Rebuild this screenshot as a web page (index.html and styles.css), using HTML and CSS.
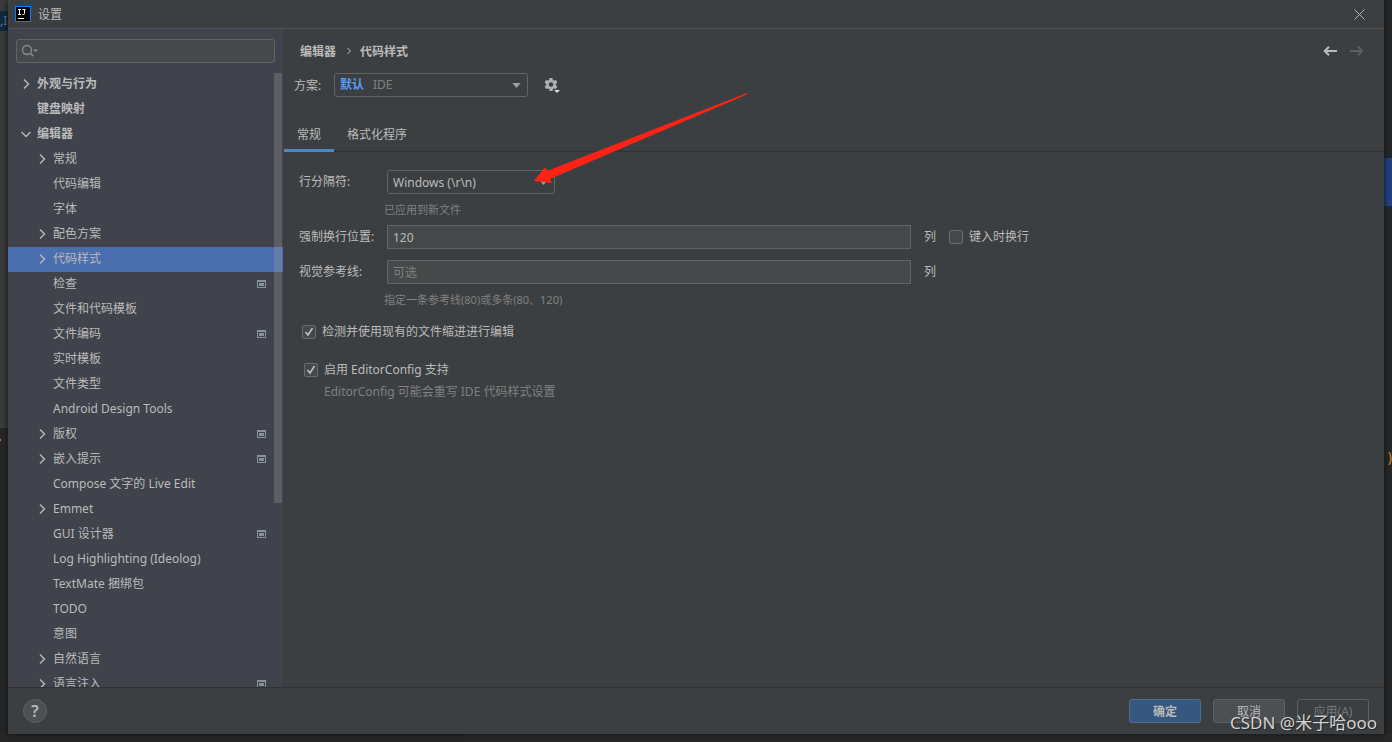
FILE: index.html
```html
<!DOCTYPE html>
<html lang="zh-CN">
<head>
<meta charset="utf-8">
<title>设置</title>
<link rel="stylesheet" href="styles.css">
</head>
<body>
<svg class="defs" aria-hidden="true">
  <symbol id="chev" viewBox="0 0 16 16"><path d="M6 3.5 10.5 8 6 12.5" fill="none" stroke="#b4b6b8" stroke-width="1.5"/></symbol>
  <symbol id="chev-down" viewBox="0 0 16 16"><path d="M3.5 6 8 10.5 12.5 6" fill="none" stroke="#b4b6b8" stroke-width="1.5"/></symbol>
  <symbol id="proj" viewBox="0 0 9 8"><path fill="#87939a" fill-rule="evenodd" d="M0 0h9v8H0zM1 2v5h7V2zM2 3h5v3H2z"/></symbol>
  <symbol id="drop" viewBox="0 0 10 6"><path fill="#9da0a2" d="M0 0h10L5 6z"/></symbol>
</svg>
<div class="backdrop">
  <span class="ide-strip"></span><span class="ide-sel">,ID</span><span class="ide-orange"></span>
  <span class="ide-blue"></span><span class="ide-paren">)</span><span class="ide-bottom"></span>
</div>
<div class="dialog" role="dialog" aria-labelledby="title">
  <header class="titlebar">
    <svg class="logo" viewBox="0 0 16 16"><path fill="#087cfa" d="M0 0h16v16H0z"/><path fill="#000" d="M1 1h14v14H1z"/><path d="M3 3.5h3M4.500 3.500v5M3 8.500h3M7.500 3.500h3M9.500 3.500v4q0 1-1 1H7.500M3 12.500h6" fill="none" stroke="#fff"/></svg>
    <h1 id="title">设置</h1>
    <button class="icon-btn" aria-label="关闭"><svg class="close" viewBox="0 0 11 11"><path d="m.5.5 10 10M10.500.5l-10 10" fill="none" stroke="#b2b4b5"/></svg></button>
  </header>
  <div class="content">
    <aside class="sidebar">
      <div class="search">
        <svg class="search-icon" viewBox="0 0 18 14"><circle cx="6" cy="6" r="4.500" fill="none" stroke="#858b90" stroke-width="1.300"/><path d="m9.300 9.300 3 3" stroke="#858b90" stroke-width="1.500"/><path fill="#858b90" d="M12 5.500h5L14.500 8z"/></svg>
        <input type="text" aria-label="搜索设置">
      </div>
      <nav class="tree" aria-label="设置分类">
        <a class="top" href="#"><svg><use href="#chev"/></svg>外观与行为</a>
        <a class="top leaf" href="#">键盘映射</a>
        <a class="top" href="#"><svg><use href="#chev-down"/></svg>编辑器</a>
        <a href="#"><svg><use href="#chev"/></svg>常规</a>
        <a class="leaf" href="#">代码编辑</a>
        <a class="leaf" href="#">字体</a>
        <a href="#"><svg><use href="#chev"/></svg>配色方案</a>
        <a class="selected" href="#" aria-current="page"><svg><use href="#chev"/></svg>代码样式</a>
        <a class="leaf" href="#">检查<svg class="proj"><use href="#proj"/></svg></a>
        <a class="leaf" href="#">文件和代码模板</a>
        <a class="leaf" href="#">文件编码<svg class="proj"><use href="#proj"/></svg></a>
        <a class="leaf" href="#">实时模板</a>
        <a class="leaf" href="#">文件类型</a>
        <a class="leaf" href="#">Android Design Tools</a>
        <a href="#"><svg><use href="#chev"/></svg>版权<svg class="proj"><use href="#proj"/></svg></a>
        <a href="#"><svg><use href="#chev"/></svg>嵌入提示<svg class="proj"><use href="#proj"/></svg></a>
        <a class="leaf" href="#">Compose 文字的 Live Edit</a>
        <a href="#"><svg><use href="#chev"/></svg>Emmet</a>
        <a class="leaf" href="#">GUI 设计器<svg class="proj"><use href="#proj"/></svg></a>
        <a class="leaf" href="#">Log Highlighting (Ideolog)</a>
        <a class="leaf" href="#">TextMate 捆绑包</a>
        <a class="leaf" href="#">TODO</a>
        <a class="leaf" href="#">意图</a>
        <a href="#"><svg><use href="#chev"/></svg>自然语言</a>
        <a href="#"><svg><use href="#chev"/></svg>语言注入<svg class="proj"><use href="#proj"/></svg></a>
        <span class="thumb"></span>
      </nav>
    </aside>
    <main class="page">
      <div class="crumbs">
        <span>编辑器</span><svg class="sep" viewBox="0 0 4 8"><path d="m.5 1 3 3-3 3" fill="none" stroke="#bbb"/></svg><span>代码样式</span>
        <button class="icon-btn back" aria-label="后退"><svg class="arrow" viewBox="0 0 14 10"><path d="M14 5H2M6 .7 1.700 5 6 9.300" fill="none" stroke="#b8babb" stroke-width="2"/></svg></button>
        <button class="icon-btn" aria-label="前进" disabled><svg class="arrow" viewBox="0 0 14 10"><path d="M0 5h12M8 .7 12.300 5 8 9.300" fill="none" stroke="#5d6062" stroke-width="2"/></svg></button>
      </div>
      <div class="scheme">
        <label for="scheme">方案:</label>
        <div class="combo combo-scheme"><select id="scheme"><option>默认</option></select><span class="combo-note">IDE</span><svg><use href="#drop"/></svg></div>
        <button class="icon-btn" aria-label="方案操作"><svg class="gear" viewBox="0 0 16 16"><g fill="#afb1b3"><circle cx="7" cy="7.500" r="4.800"/><path id="teeth" d="M5.500 1h3l.4 2.500H5.100zM5.500 14h3l.4-2.500H5.100z"/><use href="#teeth" transform="rotate(60 7 7.500)"/><use href="#teeth" transform="rotate(120 7 7.500)"/></g><circle cx="7" cy="7.500" r="2.300" fill="#3c3f41"/><path fill="#ddd" d="M10 13h6l-3 3z"/></svg></button>
      </div>
      <div class="tabs" role="tablist">
        <button role="tab" aria-selected="true">常规</button>
        <button role="tab" aria-selected="false">格式化程序</button>
      </div>
      <form class="form">
        <div class="row">
          <label class="name" for="sep">行分隔符:</label>
          <div class="combo combo-sep"><select id="sep"><option>Windows (\r\n)</option></select><svg><use href="#drop"/></svg></div>
        </div>
        <p class="hint">已应用到新文件</p>
        <div class="row">
          <label class="name" for="wrap">强制换行位置:</label>
          <input class="text" id="wrap" type="text" value="120"><span class="unit">列</span>
          <label class="check"><input type="checkbox">键入时换行</label>
        </div>
        <div class="row guides">
          <label class="name" for="guides">视觉参考线:</label>
          <input class="text" id="guides" type="text" placeholder="可选"><span class="unit">列</span>
        </div>
        <p class="hint">指定一条参考线(80)或多条(80、120)</p>
        <label class="check detect"><input type="checkbox" checked>检测并使用现有的文件缩进进行编辑</label>
        <label class="check config"><input type="checkbox" checked>启用 EditorConfig 支持</label>
        <p class="note">EditorConfig 可能会重写 IDE 代码样式设置</p>
      </form>
      <svg class="pointer" viewBox="0 0 214 90"><path fill="#ff2315" d="m-1 88 11-14 2 4L212 0l1 1L15 86l2 4z"/></svg>
    </main>
  </div>
  <footer class="footer">
    <button class="help" aria-label="帮助">?</button>
    <button class="btn primary">确定</button>
    <button class="btn">取消</button>
    <button class="btn" disabled>应用(A)</button>
  </footer>
</div>
<div class="watermark">CSDN @米子哈ooo</div>
</body>
</html>
```
FILE: styles.css
```css
* { box-sizing: border-box; }
body {
  margin: 0;
  height: 100vh;
  padding: 0 8px 8px;
  position: relative;
  overflow: hidden;
  background: #262626;
  color: #bbbbbb;
  font: 12px/16px "Noto Sans", "Noto Sans CJK SC", sans-serif;
}
button, input, select { font: inherit; color: inherit; margin: 0; }
button { padding: 0; border: 0; background: none; }
a { color: inherit; text-decoration: none; }
h1, p { margin: 0; font-size: 12px; font-weight: 400; }
svg { display: block; flex: none; overflow: visible; }
.defs { position: absolute; width: 0; height: 0; }

.backdrop span { position: absolute; }
.ide-strip { left: 0; top: 0; width: 8px; height: 428px; background: #393b3c; }
.backdrop .ide-sel { left: 0; top: 11px; width: 8px; height: 20px; overflow: hidden; background: #0e2a40; color: #66757f; line-height: 20px; }
.ide-orange { left: 0; top: 439px; width: 1px; height: 2px; background: #cc7832; }
.ide-blue { right: 0; top: 158px; width: 8px; height: 48px; background: #214283; }
.ide-paren { right: 0; top: 449px; color: #d09020; font-size: 14px; }
.ide-bottom { left: 464px; right: 0; bottom: 0; height: 8px; background: #29292b; }

.dialog {
  position: relative;
  height: 100%;
  display: flex;
  flex-direction: column;
  background: #3c3f41;
  box-shadow: 0 0 6px #111111;
}
.titlebar { display: flex; align-items: center; gap: 7px; height: 29px; padding: 0 19px 0 7px; border-bottom: 1px solid #515354; }
.titlebar h1 { padding-top: 2px; }
.titlebar .icon-btn { margin-left: auto; }
.logo { width: 16px; height: 16px; }
.close { width: 11px; height: 11px; }
.content { flex: 1; min-height: 0; display: flex; }

.sidebar { width: 275px; display: flex; flex-direction: column; background: #40434c; }
.search { position: relative; margin: 10px 8px 9px; }
.search input { display: block; width: 100%; height: 24px; padding: 0 8px 0 26px; border: 1px solid #646464; border-radius: 3px; background: #45494a; }
.search-icon { position: absolute; left: 5px; top: 5px; width: 18px; height: 14px; }
.tree { position: relative; flex: 1; min-height: 0; overflow: hidden; }
.tree a { display: flex; align-items: center; gap: 3px; height: 25px; padding: 0 17px 2px 26px; }
.tree a.leaf { padding-left: 45px; }
.tree a.top { padding-left: 10px; font-weight: 700; }
.tree a.top.leaf { padding-left: 29px; }
.tree a svg { width: 16px; height: 16px; }
.tree a .proj { width: 9px; height: 8px; margin-left: auto; }
.tree a.selected { background: #4b6eaf; }
.thumb { position: absolute; right: 1px; top: 1px; width: 8px; height: 430px; background: rgba(166, 166, 166, 0.28); }

.page { position: relative; flex: 1; min-width: 0; padding-left: 1px; }
.crumbs { display: flex; align-items: center; height: 44px; padding: 0 20px 0 16px; font-weight: 700; }
.crumbs span { padding-top: 2px; }
.sep { width: 4px; height: 8px; margin: 0 9px 0 11px; }
.arrow { width: 14px; height: 10px; }
.back { margin: 0 13px 0 auto; }
.scheme { display: flex; align-items: center; height: 24px; padding-left: 10px; }
.scheme label { width: 40px; padding-top: 2px; }
.gear { width: 16px; height: 16px; margin-left: 16px; }
.combo { position: relative; }
.combo select { display: block; width: 100%; height: 24px; padding: 0 24px 0 5px; appearance: none; border: 1px solid #646464; border-radius: 3px; background: #3c3f41; }
.combo svg { position: absolute; right: 7px; top: 10px; width: 9px; height: 5px; pointer-events: none; }
.combo-scheme { width: 194px; }
.combo-scheme select { color: #589df6; font-weight: 700; }
.combo-note { position: absolute; left: 39px; top: 4px; color: #808080; pointer-events: none; }
.combo-sep { width: 168px; }
.combo-sep select { padding-top: 2px; }
.tabs { display: flex; height: 55px; padding-top: 20px; border-bottom: 1px solid #323232; }
.tabs button { height: 35px; padding: 3px 13px 0; border-bottom: 3px solid transparent; }
.tabs button[aria-selected="true"] { border-color: #4a88c7; }

.form { padding: 18px 16px 0 15px; }
.row { display: flex; align-items: center; height: 24px; }
.name { width: 88px; flex: none; }
.text { flex: 0 1 524px; min-width: 60px; height: 24px; padding: 0 5px; border: 1px solid #646464; background: #45494a; }
.text::placeholder { color: #808080; opacity: 1; }
.unit { width: 38px; padding-left: 13px; flex: none; }
.guides { margin-top: 11px; }
.hint { margin: 8px 0 7px 85px; color: #808080; font-size: 11px; }
.check { display: flex; align-items: center; gap: 6px; white-space: nowrap; }
.check input { width: 14px; height: 14px; flex: none; appearance: none; border: 1px solid #6b6b6b; border-radius: 2px; background: #43494a; }
.check input:checked { background: #43494a url("data:image/svg+xml,%3Csvg xmlns='http://www.w3.org/2000/svg' viewBox='0 0 12 12'%3E%3Cpath d='M2.500 6 5 9l4.500-7' fill='none' stroke='%23b8b8b8' stroke-width='1.800'/%3E%3C/svg%3E"); }
.detect { margin: 16px 0 0 3px; }
.config { margin: 22px 0 0 5px; }
.note { margin: 6px 0 0 25px; color: #808080; }
.pointer { position: absolute; left: 252px; top: 64px; width: 214px; height: 90px; pointer-events: none; }

.footer { display: flex; align-items: center; gap: 12px; height: 47px; padding: 0 15px; border-top: 1px solid #323232; }
.help { width: 24px; height: 24px; margin-right: auto; border: 1px solid #5e6060; border-radius: 50%; background: #4c5052; font-size: 16px; font-weight: 600; line-height: 22px; }
.btn { width: 72px; height: 24px; padding-top: 2px; border: 1px solid #5e6060; border-radius: 3px; background: #4c5052; }
.btn.primary { border-color: #4c708c; background: #365880; font-weight: 700; }
.btn:disabled { background: transparent; color: #777777; }
.watermark { position: absolute; right: 15px; bottom: 7px; color: #d2d3d4; font-size: 17px; line-height: 24px; text-shadow: 1px 1px 1px #222222; pointer-events: none; }
```
